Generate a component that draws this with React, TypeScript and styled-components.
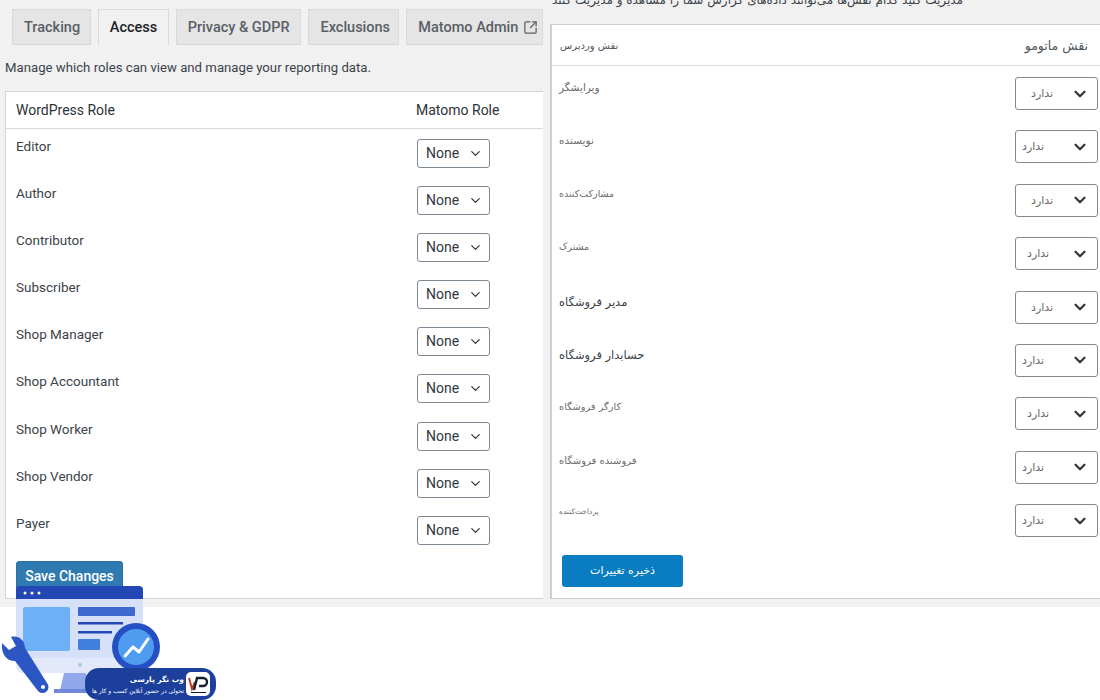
import { ChevronDown, SquareArrowOutUpRight } from "lucide-react";
import styled, { createGlobalStyle } from "styled-components";

const GlobalStyle = createGlobalStyle`
  html, body {
    margin: 0;
    height: 700px;
    overflow: hidden;
    background: #fff;
    font-family: Roboto, "Liberation Sans", sans-serif;
    color: #3c434a;
  }
`;

const Page = styled.div`
  position: relative;
  width: 1100px;
  height: 700px;
  overflow: hidden;
`;

const Panes = styled.div`
  display: flex;
  height: 607px;
  background: #f1f1f1;
`;

const LeftPane = styled.section`
  width: 545px;
  flex-shrink: 0;
  padding: 9px 2px 0 5px;
  box-sizing: border-box;
`;

const RightPane = styled.section`
  flex: 1;
  min-width: 0;
  overflow: hidden;
  padding-left: 5px;
`;

const Tabs = styled.nav`
  display: flex;
  height: 36px;
  padding-left: 7px;
  gap: 7px;
`;

const Tab = styled.a<{ $active?: boolean; $width: number }>`
  display: flex;
  align-items: center;
  gap: 5px;
  box-sizing: border-box;
  width: ${(p) => p.$width}px;
  height: ${(p) => (p.$active ? 37 : 36)}px;
  padding-left: 11px;
  font-size: 14.5px;
  font-weight: 500;
  white-space: nowrap;
  color: ${(p) => (p.$active ? "#1d2327" : "#5a6066")};
  background: ${(p) => (p.$active ? "#f1f1f1" : "#e5e5e5")};
  border: 1px solid #dadada;
  border-bottom-color: ${(p) => (p.$active ? "#f1f1f1" : "#d6d6d6")};
`;

const Intro = styled.p`
  margin: 14px 0 14px;
  font-size: 13.2px;
  line-height: 18px;
  color: #3c434a;
`;

const LeftCard = styled.div`
  width: 538px;
  height: 508px;
  box-sizing: border-box;
  background: #fff;
  border: 1px solid #d4d4d4;
  border-right: none;
`;

const LeftHead = styled.div`
  display: grid;
  grid-template-columns: 400px 1fr;
  align-items: center;
  height: 36px;
  padding-left: 10px;
  font-size: 14px;
  color: #2c3338;
  border-bottom: 1px solid #d9d9d9;
`;

const LeftRow = styled.div`
  display: grid;
  grid-template-columns: 401px 1fr;
  height: 47.1px;
  padding: 9px 0 0 10px;
  box-sizing: border-box;
  font-size: 13.5px;
  line-height: 17px;
  color: #3c434a;
`;

const LeftSelect = styled.div`
  display: flex;
  align-items: center;
  justify-content: space-between;
  box-sizing: border-box;
  width: 73px;
  height: 29px;
  margin-top: 1px;
  padding: 0 6px 0 8px;
  font-size: 14px;
  color: #32373c;
  background: #fff;
  border: 1px solid #7e8993;
  border-radius: 3px;
`;

const SaveButton = styled.button`
  display: block;
  width: 107px;
  height: 36px;
  margin: 8px 0 0 10px;
  padding: 0 0 6px;
  font: 500 14px Roboto, "Liberation Sans", sans-serif;
  color: #fff;
  background: #2f7ab1;
  border: 1px solid #2a6f9f;
  border-radius: 3px;
`;

const ClippedLine = styled.p`
  direction: rtl;
  width: 418px;
  height: 24px;
  margin: 0 0 0 -5px;
  overflow: hidden;
  white-space: nowrap;
  font: 12px/1 "DejaVu Sans", sans-serif;
  color: #3c434a;
  & > span {
    display: block;
    margin-top: -6px;
  }
`;

const RightCard = styled.div`
  height: 575px;
  box-sizing: border-box;
  background: #fff;
  border: 1px solid #cfcfcf;
  border-left-width: 2px;
  border-right: none;
  direction: ltr;
`;

const RightHead = styled.div`
  display: flex;
  align-items: center;
  justify-content: space-between;
  height: 40px;
  padding: 0 12px 0 8px;
  border-bottom: 1px solid #dcdcdc;
  color: #50575e;
`;

const HeadLabel = styled.span<{ $size: number }>`
  font: ${(p) => p.$size}px "DejaVu Sans", sans-serif;
`;

const RightRow = styled.div`
  display: flex;
  justify-content: space-between;
  height: 53.4px;
  padding: 11px 2px 0 7px;
  box-sizing: border-box;
`;

const RoleName = styled.span<{ $dark?: boolean; $size: number }>`
  margin-top: 3px;
  font: ${(p) => p.$size}px/1.4 "DejaVu Sans", sans-serif;
  color: ${(p) => (p.$dark ? "#3c434a" : "#6c6c6c")};
`;

const RightSelect = styled.div<{ $indent: number }>`
  display: flex;
  align-items: center;
  justify-content: space-between;
  box-sizing: border-box;
  width: 83px;
  height: 33px;
  padding: 0 8px 0 ${(p) => p.$indent}px;
  font: 11px "DejaVu Sans", sans-serif;
  color: #666;
  background: #fff;
  border: 1px solid #85888c;
  border-radius: 3px;
`;

const PersianSave = styled.button`
  display: block;
  width: 121px;
  height: 32px;
  margin: 8px 0 0 10px;
  font: 11px "DejaVu Sans", sans-serif;
  color: #fff;
  background: #0a7dc2;
  border: none;
  border-radius: 3px;
`;

const Mascot = styled.svg`
  position: absolute;
  left: 0;
  top: 586px;
`;

const Badge = styled.div`
  position: absolute;
  left: 85px;
  top: 668px;
  display: flex;
  align-items: center;
  justify-content: flex-end;
  gap: 2px;
  box-sizing: border-box;
  width: 131px;
  height: 32px;
  padding: 0 6px 0 4px;
  background: #1c3f9b;
  border-radius: 14px;
`;

const BadgeText = styled.div`
  direction: rtl;
  text-align: right;
  color: #fff;
  font-family: "DejaVu Sans", sans-serif;
  white-space: nowrap;
`;

const BadgeTitle = styled.div`
  font-size: 7.5px;
  font-weight: 700;
  line-height: 12px;
`;

const BadgeSub = styled.div`
  font-size: 6px;
  line-height: 9px;
`;

const BadgeLogo = styled.svg`
  flex-shrink: 0;
  border-radius: 5px;
  background: #fff;
`;

const wpRoles = ["Editor", "Author", "Contributor", "Subscriber", "Shop Manager", "Shop Accountant", "Shop Worker", "Shop Vendor", "Payer"];

const faRoles = [
  { name: "ویرایشگر", size: 10.5, indent: 15 },
  { name: "نویسنده", size: 10.5, indent: 6 },
  { name: "مشارکت‌کننده", size: 9.5, indent: 15 },
  { name: "مشترک", size: 9.5, indent: 11 },
  { name: "مدیر فروشگاه", size: 11.5, dark: true, indent: 15 },
  { name: "حسابدار فروشگاه", size: 11.5, dark: true, indent: 6 },
  { name: "کارگر فروشگاه", size: 9.8, indent: 11 },
  { name: "فروشنده فروشگاه", size: 10, indent: 6 },
  { name: "پرداخت‌کننده", size: 7.5, indent: 6 },
];

function LogoArt() {
  return (
    <Mascot width="170" height="114" viewBox="0 0 170 114">
      <path d="M16 13h127v68a6 6 0 0 1-6 6H22a6 6 0 0 1-6-6z" fill="#e3e9fb" />
      <path d="M16 13h127v59H16z" fill="#d6e0f8" />
      <circle cx="80" cy="79" r="2" fill="#b5c2ea" />
      <path d="M64 87h22l4 17H60z" fill="#93a8ea" />
      <path d="M54 103h38v4H54z" fill="#7189dc" />
      <path d="M20 0h119a4 4 0 0 1 4 4v9H16V4a4 4 0 0 1 4-4z" fill="#2347b5" />
      <circle cx="25" cy="7" r="1.5" fill="#fff" />
      <circle cx="32" cy="7" r="1.5" fill="#fff" />
      <circle cx="39" cy="7" r="1.5" fill="#fff" />
      <rect x="23" y="21" width="47" height="44" rx="2" fill="#6db0f6" />
      <rect x="78" y="21" width="57" height="9" rx="1" fill="#3d68d0" />
      <rect x="78" y="36" width="45" height="2.5" fill="#2347b5" />
      <rect x="78" y="45" width="34" height="2.5" fill="#2347b5" />
      <rect x="78" y="53" width="22" height="11" rx="1" fill="#3f7fe0" />
      <path
        d="M11 51C18 49 25 54 25 62L47 97A6 6 0 0 1 38 105L15 75C7 75 1 69 2 57L9 64L16 60Z"
        fill="#2c56c4"
      />
      <circle cx="43" cy="101" r="2" fill="#fff" />
      <circle cx="136" cy="61" r="24" fill="#2450c4" />
      <circle cx="136" cy="61" r="18" fill="#4f9bf0" />
      <path d="M125 70l8-9 6 5 9-13" fill="none" stroke="#fff" strokeWidth="3" strokeLinecap="round" strokeLinejoin="round" />
    </Mascot>
  );
}

export default function App() {
  return (
    <Page>
      <GlobalStyle />
      <Panes>
        <LeftPane>
          <Tabs>
            <Tab $width={79}>Tracking</Tab>
            <Tab $width={71} $active>Access</Tab>
            <Tab $width={126}>Privacy &amp; GDPR</Tab>
            <Tab $width={91}>Exclusions</Tab>
            <Tab $width={137}>
              Matomo Admin <SquareArrowOutUpRight size={15} strokeWidth={2} />
            </Tab>
          </Tabs>
          <Intro>Manage which roles can view and manage your reporting data.</Intro>
          <LeftCard>
            <LeftHead>
              <span>WordPress Role</span>
              <span>Matomo Role</span>
            </LeftHead>
            {wpRoles.map((role) => (
              <LeftRow key={role}>
                <span>{role}</span>
                <LeftSelect>
                  None <ChevronDown size={15} strokeWidth={2} />
                </LeftSelect>
              </LeftRow>
            ))}
            <SaveButton>Save Changes</SaveButton>
          </LeftCard>
        </LeftPane>
        <RightPane>
          <ClippedLine>
            <span>مدیریت کنید کدام نقش‌ها می‌توانند داده‌های گزارش شما را مشاهده و مدیریت کنند</span>
          </ClippedLine>
          <RightCard>
            <RightHead>
              <HeadLabel $size={10}>نقش وردپرس</HeadLabel>
              <HeadLabel $size={12.5}>نقش ماتومو</HeadLabel>
            </RightHead>
            {faRoles.map((role) => (
              <RightRow key={role.name}>
                <RoleName $size={role.size} $dark={role.dark}>{role.name}</RoleName>
                <RightSelect $indent={role.indent}>
                  ندارد <ChevronDown size={18} strokeWidth={3} color="#32373c" />
                </RightSelect>
              </RightRow>
            ))}
            <PersianSave>ذخیره تغییرات</PersianSave>
          </RightCard>
        </RightPane>
      </Panes>
      <LogoArt />
      <Badge>
        <BadgeText>
          <BadgeTitle>وب نگر پارسی</BadgeTitle>
          <BadgeSub>تحولی در حضور آنلاین کسب و کار ها</BadgeSub>
        </BadgeText>
        <BadgeLogo width="24" height="24" viewBox="0 0 24 24">
          <path d="M3 6l3 11 3-7" fill="none" stroke="#c0392b" strokeWidth="2" />
          <path d="M8 18l3-12h6a4 4 0 0 1 0 8h-4" fill="none" stroke="#14202f" strokeWidth="2.4" />
          <path d="M5 20.5h15" stroke="#14202f" strokeWidth="1" />
        </BadgeLogo>
      </Badge>
    </Page>
  );
}
